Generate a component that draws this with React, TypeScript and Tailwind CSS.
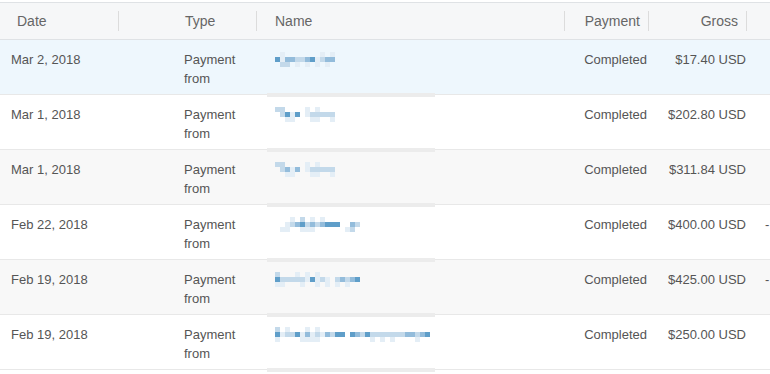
import React from 'react'

// intensity strings for the pixelated names: top / middle / bottom rows of 5px cells
const rows = [
  { date: 'Mar 2, 2018', gross: '$17.40 USD', dash: false, bg: 'bg-[#eef7fd]',
    px: ['010000000101', '413322341233', '022010101010'] },
  { date: 'Mar 1, 2018', gross: '$202.80 USD', dash: false, bg: 'bg-white',
    px: ['220000101000', '024140122222', '001100011001'] },
  { date: 'Mar 1, 2018', gross: '$311.84 USD', dash: false, bg: 'bg-[#f8f8f8]',
    px: ['220000101000', '023130122222', '001100011001'] },
  { date: 'Feb 22, 2018', gross: '$400.00 USD', dash: true, bg: 'bg-white',
    px: ['00010201010000000', '00123423234440032', '01100111000000120'] },
  { date: 'Feb 19, 2018', gross: '$425.00 USD', dash: true, bg: 'bg-[#f8f8f8]',
    px: ['20001010100000000', '42222214121023234', '11000100101010100'] },
  { date: 'Feb 19, 2018', gross: '$250.00 USD', dash: false, bg: 'bg-white',
    px: ['2010001010000000000000000000000', '4122413121324404324222222233234', '1000011110000000000101010000100'] },
]

const shades = ['transparent', '#e4eef6', '#c3d9ea', '#93bcdb', '#5f9ec9']

function Pixels({ px }: { px: string[] }) {
  const w = px[1].length * 5
  return (
    <svg width={w} height={15} className="block">
      {px.map((line, r) =>
        line.split('').map((c, i) => (
          <rect key={r + '-' + i} x={i * 5} y={r * 5} width={5} height={5} fill={shades[Number(c)]} />
        ))
      )}
    </svg>
  )
}

const cols = 'grid grid-cols-[119px_138px_308px_84px_98px_1fr]'

export default function App() {
  return (
    <div className="w-[770px] h-[374px] overflow-hidden bg-white text-[#555] text-[13px] pt-[2px]" style={{ fontFamily: '"Liberation Sans", Arial, sans-serif' }}>
      <div className={`${cols} h-[38px] items-center bg-[#f6f7f8] border-t border-b border-[#dfe2e5] text-[14px] text-[#666]`}>
        <div className="pl-[17px] h-[20px] leading-[20px] border-r border-[#dcdcdc]">Date</div>
        <div className="pl-[66px] h-[20px] leading-[20px] border-r border-[#dcdcdc]">Type</div>
        <div className="pl-[18px] h-[20px] leading-[20px] border-r border-[#dcdcdc]">Name</div>
        <div className="pr-[8px] text-right h-[20px] leading-[20px] border-r border-[#dcdcdc]">Payment</div>
        <div className="pr-[8px] text-right h-[20px] leading-[20px] border-r border-[#dcdcdc]">Gross</div>
        <div></div>
      </div>
      {rows.map((r, idx) => (
        <div key={idx} className={`${cols} h-[55px] border-b border-[#e8e8e8] ${r.bg} leading-[19px]`}>
          <div className="pl-[11px] pt-[10px]">{r.date}</div>
          <div className="pl-[65px] pt-[10px]">Payment<br />from</div>
          <div className="relative pl-[18px] pt-[12px]">
            <Pixels px={r.px} />
            <div className="absolute left-[10px] -bottom-[3px] w-[168px] h-[4px] bg-[#ececec]"></div>
          </div>
          <div className="text-right pt-[10px] pr-[2px]">Completed</div>
          <div className="text-right pt-[10px] pr-[1px]">{r.gross}</div>
          <div className="pl-[18px] pt-[10px]">{r.dash ? '-' : ''}</div>
        </div>
      ))}
    </div>
  )
}
